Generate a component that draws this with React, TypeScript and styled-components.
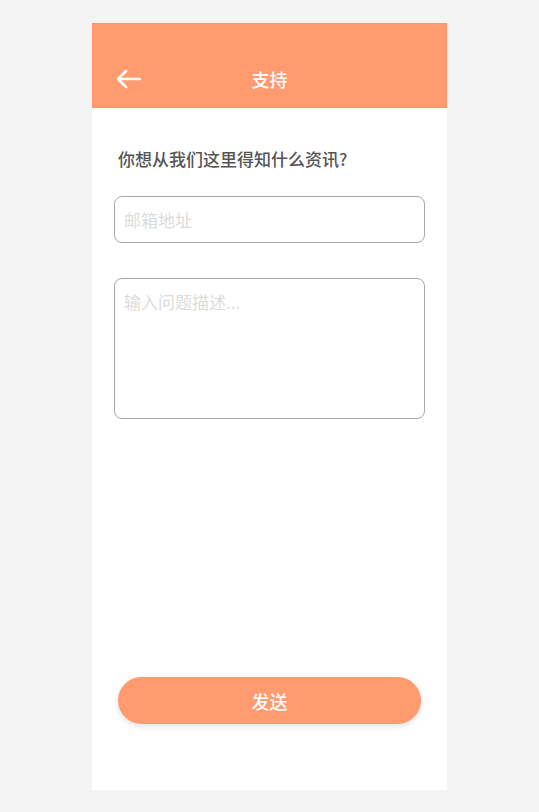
import styled, { createGlobalStyle } from 'styled-components';

const GlobalStyle = createGlobalStyle`
  html, body {
    margin: 0;
    padding: 0;
    background: #f4f4f4;
    font-family: 'Noto Sans CJK SC', 'Noto Sans', sans-serif;
  }
`;

const ORANGE = '#ff9b6f';

const Page = styled.div`
  display: flex;
  justify-content: center;
  padding-top: 23px;
  padding-bottom: 22px;
`;

const Phone = styled.div`
  width: 355px;
  height: 767px;
  background: #fff;
  display: flex;
  flex-direction: column;
`;

const Header = styled.div`
  height: 85px;
  box-sizing: border-box;
  background: ${ORANGE};
  border: 1px solid #ff9466;
  display: grid;
  grid-template-columns: 60px 1fr 60px;
  align-items: end;
  padding-bottom: 16px;
`;

const BackButton = styled.button`
  background: none;
  border: none;
  padding: 0 0 0 22px;
  height: 24px;
  display: flex;
  align-items: center;
  cursor: pointer;
`;

const Title = styled.div`
  text-align: center;
  color: #fff;
  font-size: 18px;
  font-weight: 500;
  line-height: 24px;
`;

const Body = styled.div`
  flex: 1;
  display: flex;
  flex-direction: column;
  padding: 39px 22px 0;
`;

const Question = styled.div`
  color: #555;
  font-size: 17px;
  font-weight: 500;
  padding-left: 4px;
  line-height: 24px;
`;

const fieldBase = `
  width: 311px;
  box-sizing: border-box;
  border: 1px solid #a8a8a8;
  border-radius: 8px;
  font-family: 'Noto Sans CJK SC', 'Noto Sans', sans-serif;
  font-size: 17px;
  color: #333;
  padding: 0 9px;
  outline: none;
  &::placeholder {
    color: #dcdcdc;
  }
`;

const EmailInput = styled.input`
  ${fieldBase}
  height: 47px;
  margin-top: 25px;
`;

const DescArea = styled.textarea`
  ${fieldBase}
  height: 141px;
  margin-top: 35px;
  padding-top: 11px;
  resize: none;
  line-height: 24px;
`;

const Spacer = styled.div`
  flex: 1;
`;

const SendButton = styled.button`
  align-self: center;
  width: 303px;
  height: 47px;
  margin-bottom: 66px;
  border: none;
  border-radius: 24px;
  background: ${ORANGE};
  color: #fff;
  font-family: 'Noto Sans CJK SC', 'Noto Sans', sans-serif;
  font-size: 18px;
  font-weight: 500;
  box-shadow: 0 2px 6px rgba(0, 0, 0, 0.12);
  cursor: pointer;
`;

const BackIcon = () => (
  <svg width="26" height="20" viewBox="0 0 26 20" fill="none">
    <path
      d="M25 10H3M11 2L3 10L11 18"
      stroke="#fff"
      strokeWidth="2.6"
      strokeLinecap="round"
      strokeLinejoin="round"
    />
  </svg>
);

export default function App() {
  return (
    <>
      <GlobalStyle />
      <Page>
        <Phone>
          <Header>
            <BackButton aria-label="返回">
              <BackIcon />
            </BackButton>
            <Title>支持</Title>
            <div />
          </Header>
          <Body>
            <Question>你想从我们这里得知什么资讯?</Question>
            <EmailInput placeholder="邮箱地址" />
            <DescArea placeholder="输入问题描述..." />
            <Spacer />
            <SendButton>发送</SendButton>
          </Body>
        </Phone>
      </Page>
    </>
  );
}
